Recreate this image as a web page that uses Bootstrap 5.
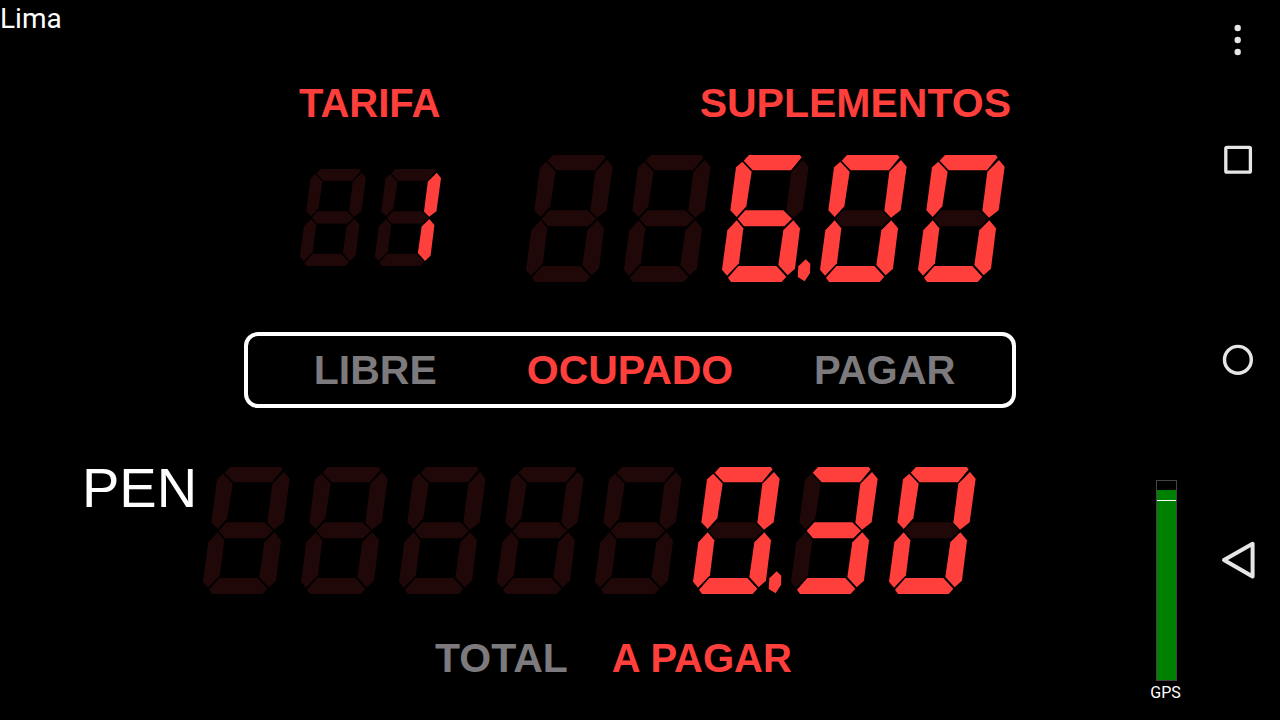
<!DOCTYPE html>
<html lang="es">
<head>
<meta charset="utf-8">
<meta name="viewport" content="width=device-width, initial-scale=1">
<title>Taxímetro</title>
<link href="https://cdn.jsdelivr.net/npm/bootstrap@5.3.0/dist/css/bootstrap.min.css" rel="stylesheet">
<style>
  :root { --lit: #ff3f3c; --dim: #200808; --idle: #7c7a7d; }
  body { background: #000; color: #fff; font-family: Roboto, sans-serif; }
  .city { font-size: 28px; line-height: 38px; }
  .meter { padding: 41px 121px 0 82px; font-family: "Liberation Sans", Arial, sans-serif; }
  .caption { font-size: 41px; line-height: 48px; font-weight: 700; color: var(--lit); text-rendering: optimizeLegibility; }
  .caption.snug { font-size: 40px; }
  .idle { color: var(--idle); }
  .readouts { gap: 76px; padding-right: 1px; }
  .readout { gap: 28px; }
  .digits svg { display: block; width: 98px; height: 127px; overflow: visible; }
  .digits.compact { height: 127px; padding: 14px 0 0 0; }
  .digits.compact svg { width: 75px; height: 97px; }
  .digits use { fill: var(--dim); }
  .digits use.on { fill: var(--lit); }
  .status { width: 772px; max-width: 100%; height: 76px; margin: 50px 0 59px; border: 4px solid #fff; border-radius: 14px; }
  .status button { flex: 1 1 0; padding: 0; border: 0; background: none; }
  .fare { padding-right: 30px; }
  .currency { font-size: 56px; line-height: 42px; }
  .totals { gap: 44px; margin-top: 40px; padding-left: 353px; }
  .gps { width: 59px; padding-bottom: 17px; font-size: 16px; line-height: 20px; }
  .gauge { width: 21px; height: 201px; border: 1px solid #444; margin-bottom: 2px; }
  .gauge-fill { background: #008000; }
  .gauge-mark { height: 1px; bottom: 90%; background: #fff; }
  .gauge-label { padding-right: 2px; }
  .sysnav { width: 84px; padding-bottom: 60px; }
  .sysnav button { flex: 1 1 0; padding: 0; border: 0; background: none; color: #e6e6e6; }
  .sysnav .more { flex: 0 0 60px; padding-top: 20px; }
  .sysnav svg { display: block; margin: 0 auto; }
</style>
</head>
<body>
<svg width="0" height="0" class="position-absolute" aria-hidden="true">
  <defs>
    <polygon id="a" points="120,36 272,36 278,43 246,82 131,82 104,53"/>
    <polygon id="b" points="282,51 299,71 281,202 252,224 232,203 247,86"/>
    <polygon id="c" points="253,232 273,256 258,377 236,397 208,366 223,262"/>
    <polygon id="d" points="88,369 202,369 232,401 218,417 66,417 57,404"/>
    <polygon id="e" points="83,232 103,256 90,361 54,398 39,380 55,262"/>
    <polygon id="f" points="100,56 128,86 112,190 83,222 64,202 81,73"/>
    <polygon id="g" points="109,202 223,202 249,227 226,250 105,250 86,227"/>
    <polygon id="p" points="290,349 304,362 303,390 287,415 266,402 268,370"/>
  </defs>
</svg>
<div class="d-flex min-vh-100">
  <div class="flex-grow-1">
    <header class="city">Lima</header>
    <main class="meter">
      <div class="readouts d-flex justify-content-end">
        <section class="readout d-flex flex-column">
          <div class="caption snug">TARIFA</div>
          <div class="digits compact d-flex" data-value=" 1" role="img" aria-label="1"></div>
        </section>
        <section class="readout d-flex flex-column">
          <div class="caption text-end pe-1">SUPLEMENTOS</div>
          <div class="digits d-flex" data-value="  6.00" role="img" aria-label="6.00"></div>
        </section>
      </div>
      <div class="status d-flex align-items-center ms-auto">
        <button type="button" class="caption idle">LIBRE</button>
        <button type="button" class="caption">OCUPADO</button>
        <button type="button" class="caption snug idle">PAGAR</button>
      </div>
      <div class="fare d-flex justify-content-between">
        <div class="currency">PEN</div>
        <div class="digits d-flex" data-value="     0.30" role="img" aria-label="0.30"></div>
      </div>
      <div class="totals d-flex">
        <div class="caption idle">TOTAL</div>
        <div class="caption snug text-nowrap">A PAGAR</div>
      </div>
    </main>
  </div>
  <aside class="gps d-flex flex-column align-items-center justify-content-end flex-shrink-0">
    <div class="gauge position-relative d-flex flex-column justify-content-end" role="meter" aria-label="GPS" aria-valuenow="95">
      <div class="gauge-fill" style="height: 95.5%"></div>
      <div class="gauge-mark position-absolute w-100"></div>
    </div>
    <div class="gauge-label">GPS</div>
  </aside>
  <nav class="sysnav d-flex flex-column flex-shrink-0">
    <button type="button" class="more" aria-label="Más opciones">
      <svg width="40" height="40" viewBox="0 0 40 40" fill="currentColor"><circle cx="19.7" cy="8" r="3.2"/><circle cx="19.7" cy="20" r="3.2"/><circle cx="19.7" cy="32" r="3.2"/></svg>
    </button>
    <button type="button" aria-label="Recientes">
      <svg width="40" height="40" viewBox="0 0 40 40" fill="none" stroke="currentColor" stroke-width="3.3"><rect x="7.8" y="7.4" width="24.6" height="24.8" rx="1.2"/></svg>
    </button>
    <button type="button" aria-label="Inicio">
      <svg width="40" height="40" viewBox="0 0 40 40" fill="none" stroke="currentColor" stroke-width="3.4"><circle cx="19.9" cy="19.8" r="13.4"/></svg>
    </button>
    <button type="button" aria-label="Atrás">
      <svg width="40" height="40" viewBox="0 0 40 40" fill="none" stroke="currentColor" stroke-width="4" stroke-linejoin="round"><path d="M6 20 34.6 3.8V36.6Z"/></svg>
    </button>
  </nav>
</div>
<script src="https://cdn.jsdelivr.net/npm/bootstrap@5.3.0/dist/js/bootstrap.bundle.min.js"></script>
<script>
  // Segments lit for each character of a display
  const segments = { ' ': '', '0': 'abcdef', '1': 'bc', '3': 'abcdg', '6': 'acdefg' };
  document.querySelectorAll('.digits').forEach(display => {
    display.innerHTML = display.dataset.value.match(/[ \d]\.?/g).map(cell => {
      const parts = [...'abcdefg'].map(s =>
        `<use href="#${s}"${segments[cell[0]].includes(s) ? ' class="on"' : ''}/>`).join('');
      const point = cell[1] ? '<use href="#p" class="on"/>' : '';
      return `<svg viewBox="36 36 294 381">${parts}${point}</svg>`;
    }).join('');
  });
</script>
</body>
</html>
